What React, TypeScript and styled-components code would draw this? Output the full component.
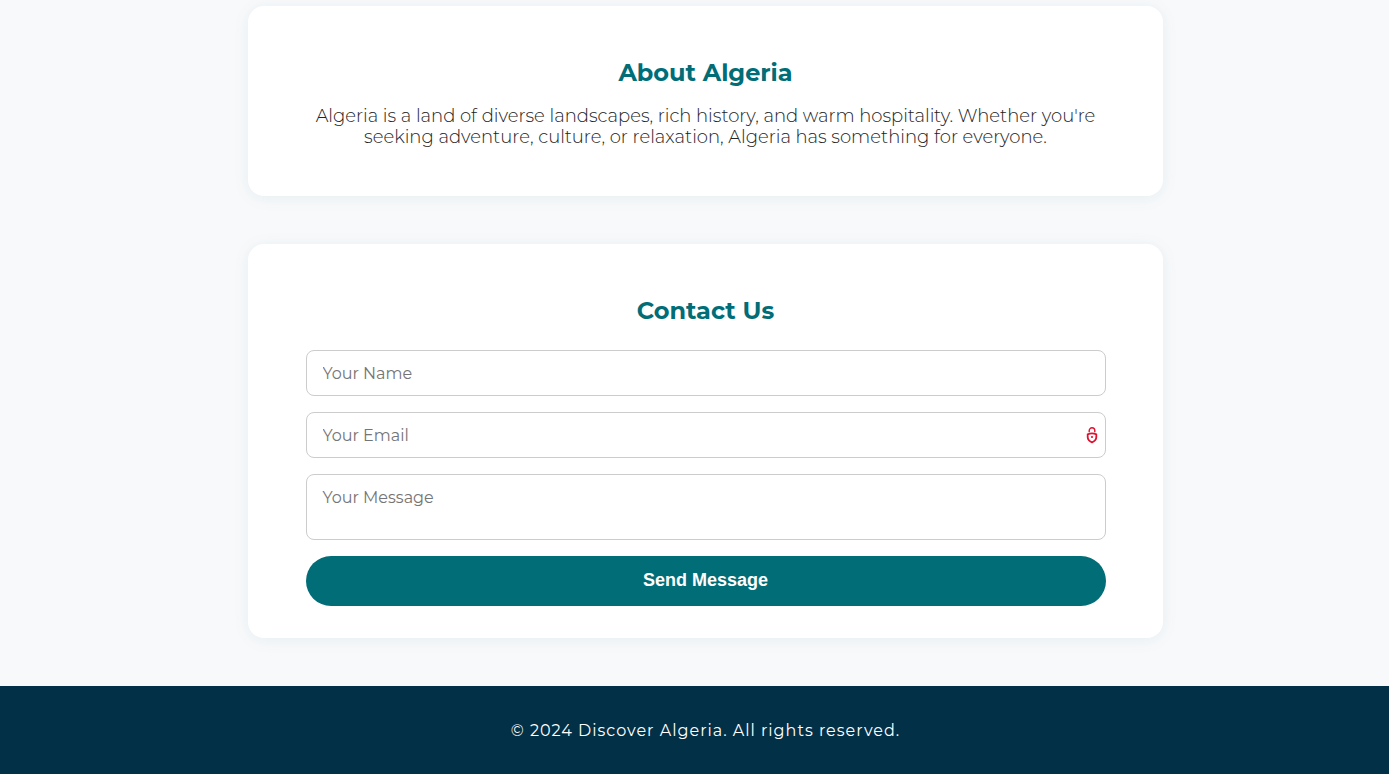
import React from "react";
import styled, { createGlobalStyle } from "styled-components";

const sans = `Montserrat, Inter, "Liberation Sans", sans-serif`;

const GlobalStyle = createGlobalStyle`
  *, *::before, *::after { box-sizing: border-box; }
  body {
    margin: 0;
    background: #f8f9fb;
    color: #222;
    font-family: ${sans};
  }
`;

const Page = styled.div`
  min-height: 100vh;
  display: flex;
  flex-direction: column;
`;

const Content = styled.main`
  display: flex;
  flex-direction: column;
  align-items: center;
  gap: 48px;
  padding: 6px 0 48px 22px;
`;

const Card = styled.section`
  width: 100%;
  max-width: 915px;
  padding: 48px 56px 32px;
  border-radius: 16px;
  background: #fff;
  box-shadow: 0 2px 16px rgba(0, 109, 119, 0.08);
  text-align: center;
`;

const Title = styled.h2`
  margin: 0;
  color: #006d77;
  font-size: 24px;
  font-weight: 700;
  line-height: 38px;
`;

const Text = styled.p`
  margin: 14px 0 16px;
  font-size: 18px;
  font-weight: 300;
  line-height: 21px;
`;

const Form = styled.form`
  display: flex;
  flex-direction: column;
  gap: 16px;
  max-width: 800px;
  margin: 20px auto 0;
`;

const Field = styled.label`
  position: relative;
  display: block;
`;

const fieldLook = `
  display: block;
  width: 100%;
  padding: 13px 16px;
  border: 1px solid #ccc;
  border-radius: 8px;
  background: #fff;
  font-family: ${sans};
  font-size: 16px;
  line-height: 20px;
  outline: none;
  &::placeholder { color: #757575; opacity: 1; }
`;

const Input = styled.input`
  ${fieldLook}
  height: 46px;
`;

const TextArea = styled.textarea`
  ${fieldLook}
  height: 66px;
  resize: none;
  overflow: hidden;
`;

const LockIcon = styled.svg`
  position: absolute;
  top: 15px;
  right: 8px;
  width: 12px;
  height: 17px;
`;

const Button = styled.button`
  height: 50px;
  padding: 0 16px 2px;
  border: 0;
  border-radius: 25px;
  background: #006d77;
  color: #fff;
  font-family: "Liberation Sans", Arial, sans-serif;
  font-size: 18px;
  font-weight: 700;
  cursor: pointer;
`;

const Footer = styled.footer`
  flex: 1;
  padding: 32px 0 30px 22px;
  background: #023047;
  color: #fff;
  font-size: 16px;
  line-height: 26px;
  letter-spacing: 1px;
  text-align: center;
`;

export default function App() {
  return (
    <Page>
      <GlobalStyle />
      <Content>
        <Card>
          <Title>About Algeria</Title>
          <Text>
            Algeria is a land of diverse landscapes, rich history, and warm hospitality. Whether you're
            seeking adventure, culture, or relaxation, Algeria has something for everyone.
          </Text>
        </Card>
        <Card>
          <Title>Contact Us</Title>
          <Form onSubmit={(e) => e.preventDefault()}>
            <Field>
              <Input type="text" name="name" placeholder="Your Name" aria-label="Your Name" />
            </Field>
            <Field>
              <Input type="email" name="email" placeholder="Your Email" aria-label="Your Email" />
              <LockIcon viewBox="0 0 12 17" fill="none" stroke="#e0102f" aria-hidden="true">
                <path d="M3.200 5.200V3.600a2.800 2.800 0 0 1 5.600 0V5.200" strokeWidth="1.4" />
                <path d="M1.700 7.300Q6 5.600 10.300 7.300V10.300Q10.100 13.800 6 15.400Q1.900 13.800 1.700 10.300Z" strokeWidth="1.8" />
                <circle cx="6" cy="10" r="1.1" fill="#e0102f" stroke="none" />
              </LockIcon>
            </Field>
            <Field>
              <TextArea name="message" placeholder="Your Message" aria-label="Your Message" />
            </Field>
            <Button type="submit">Send Message</Button>
          </Form>
        </Card>
      </Content>
      <Footer>© 2024 Discover Algeria. All rights reserved.</Footer>
    </Page>
  );
}
